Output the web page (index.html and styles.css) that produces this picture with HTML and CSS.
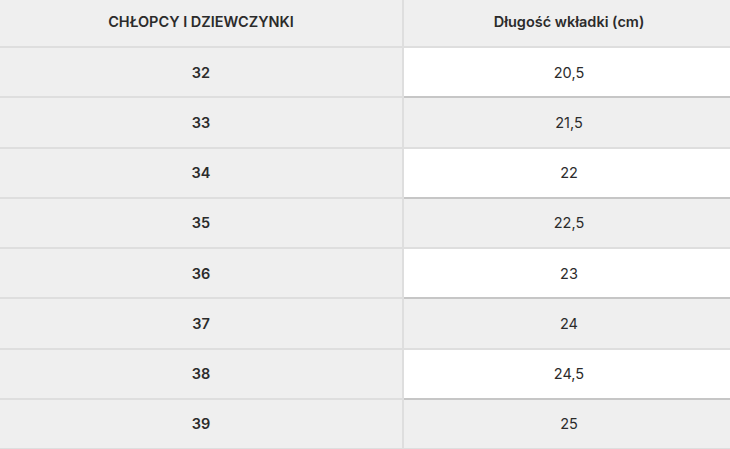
FILE: index.html
```html
<!DOCTYPE html>
<html lang="pl">
<head>
<meta charset="utf-8">
<link rel="stylesheet" href="styles.css">
<title>Tabela rozmiarów</title>
</head>
<body>
<div class="size-table">
  <div class="cell head left">CHŁOPCY I DZIEWCZYNKI</div>
  <div class="cell head right">Długość wkładki (cm)</div>

  <div class="cell left size">32</div>
  <div class="cell right white">20,5</div>

  <div class="cell left size">33</div>
  <div class="cell right">21,5</div>

  <div class="cell left size">34</div>
  <div class="cell right white">22</div>

  <div class="cell left size">35</div>
  <div class="cell right">22,5</div>

  <div class="cell left size">36</div>
  <div class="cell right white">23</div>

  <div class="cell left size">37</div>
  <div class="cell right">24</div>

  <div class="cell left size">38</div>
  <div class="cell right white">24,5</div>

  <div class="cell left size">39</div>
  <div class="cell right">25</div>
</div>
</body>
</html>
```

FILE: styles.css
```css
html, body {
  margin: 0;
  padding: 0;
  background: #efefef;
}

body {
  font-family: Inter, "Liberation Sans", sans-serif;
  color: #2b2b2b;
  font-size: 14.5px;
}

.size-table {
  display: grid;
  grid-template-columns: 404px 1fr;
  grid-template-rows: 48px;
  grid-auto-rows: 50.25px;
  width: 730px;
}

.cell {
  display: flex;
  align-items: center;
  justify-content: center;
  box-sizing: border-box;
  background: #efefef;
  border-bottom: 2px solid #dedede;
}

.left {
  border-right: 2px solid #dedede;
}

.right {
  padding-left: 4px;
}

.head {
  font-weight: 600;
  padding-bottom: 4px;
}

.size {
  font-weight: 600;
}

.right.white {
  background: #ffffff;
  border-bottom-color: #c6c6c6;
}
```
